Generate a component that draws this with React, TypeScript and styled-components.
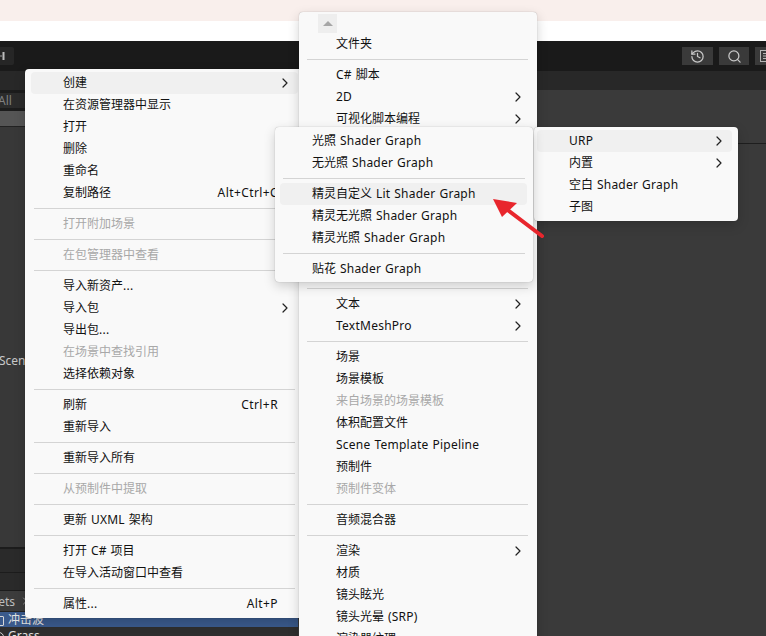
import React from "react";
import styled, { createGlobalStyle } from "styled-components";
import { ChevronRight, History, Search } from "lucide-react";

const GlobalStyle = createGlobalStyle`
	html, body {
		margin: 0;
		padding: 0;
		background: #383838;
		overflow: hidden;
	}
	body {
		font-family: "Noto Sans", "Noto Sans CJK SC", sans-serif;
		font-size: 12px;
	}
`;

const Page = styled.div`
	position: relative;
	width: 766px;
	height: 636px;
	display: flex;
	flex-direction: column;
	overflow: hidden;
`;

const PinkBand = styled.div`
	height: 21px;
	background: #f9efec;
`;

const WhiteBand = styled.div`
	height: 20px;
	background: #fff;
`;

const Toolbar = styled.div`
	height: 30px;
	flex: none;
	display: flex;
	align-items: flex-start;
	padding-top: 6px;
	box-sizing: border-box;
	background: #1a1a1a;
`;

const LayoutButton = styled.div`
	width: 14px;
	height: 18px;
	background: #262626;
	border-radius: 0 2px 2px 0;
	display: flex;
	align-items: center;
`;

const ToolGroup = styled.div`
	margin-left: auto;
	margin-right: -11px;
	display: flex;
	gap: 6px;
`;

const ToolButton = styled.div<{ $w: number }>`
	width: ${(p) => p.$w}px;
	height: 18px;
	background: #3a3a3a;
	color: #c8c8c8;
	display: flex;
	align-items: center;
	justify-content: center;
`;

const Workspace = styled.div`
	flex: 1;
	display: flex;
	min-height: 0;
`;

const Sidebar = styled.div`
	width: 298px;
	flex: none;
	display: flex;
	flex-direction: column;
	background: #383838;
	color: #c8c8c8;
`;

const SideBar = styled.div<{ $h: number; $bg: string }>`
	height: ${(p) => p.$h}px;
	flex: none;
	background: ${(p) => p.$bg};
	display: flex;
	align-items: center;
	overflow: hidden;
	white-space: nowrap;
`;

const AssetRow = styled.div<{ $h: number; $bg: string; $top: number }>`
	height: ${(p) => p.$h}px;
	flex: none;
	box-sizing: border-box;
	padding-top: ${(p) => p.$top}px;
	background: ${(p) => p.$bg};
	display: flex;
	align-items: flex-start;
	line-height: 16px;
	overflow: hidden;
	white-space: nowrap;
`;

const SearchText = styled.span`
	color: #808080;
	font-size: 12px;
	margin-left: -2px;
`;

const SceneArea = styled.div`
	flex: 1;
	padding-top: 225px;
	line-height: 18px;
	font-size: 12px;
	text-indent: -1px;
`;

const BreadcrumbText = styled.span`
	font-size: 12px;
	color: #bdbdbd;
	margin-left: -21px;
`;

const Crumb = styled(ChevronRight)`
	margin-left: 4px;
	color: #9a9a9a;
`;

const AssetLabel = styled.span`
	margin-left: 8px;
	font-size: 12px;
	color: #e0e0e0;
`;

const AssetIcon = styled.span<{ $round?: boolean }>`
	width: 8px;
	height: 8px;
	margin: 4px -4px 0 -6px;
	border: 1px solid #d6d6d6;
	border-radius: ${(p) => (p.$round ? "50%" : "1px")};
	flex: none;
`;

const MainPane = styled.div`
	flex: 1;
	display: flex;
	flex-direction: column;
	background: #3a3a3a;
`;

const TabStrip = styled.div`
	height: 19px;
	flex: none;
	background: #282828;
`;

const PaneHeader = styled.div`
	height: 54px;
	flex: none;
	box-sizing: border-box;
	border-bottom: 1px solid #1e1e1e;
`;

const Menu = styled.div<{ $x: number; $y: number; $w: number; $z: number; $bottom?: number }>`
	position: absolute;
	left: ${(p) => p.$x}px;
	top: ${(p) => p.$y}px;
	width: ${(p) => p.$w}px;
	z-index: ${(p) => p.$z};
	box-sizing: border-box;
	padding: 3px 0 ${(p) => p.$bottom ?? 3}px;
	background: #f9f9f9;
	border-radius: 4px;
	box-shadow: 0 0 1px rgba(0, 0, 0, 0.35), 0 4px 12px rgba(0, 0, 0, 0.18);
`;

const Row = styled.div<{ $active?: boolean; $disabled?: boolean; $inset: number; $indent: number }>`
	height: 22px;
	box-sizing: border-box;
	margin: 0 6px 0 ${(p) => p.$inset}px;
	padding: 0 5px 2px ${(p) => p.$indent}px;
	display: flex;
	align-items: center;
	border-radius: 4px;
	background: ${(p) => (p.$active ? "#f0f0f0" : "transparent")};
	color: ${(p) => (p.$disabled ? "#a8a8a8" : "#111111")};
	white-space: nowrap;
`;

const LatinText = styled.span`
	letter-spacing: 0.25px;
	word-spacing: 0.5px;
	white-space: pre;
`;

const Shortcut = styled.span`
	margin-left: auto;
	padding-right: 15px;
	letter-spacing: 0.4px;
`;

const Arrow = styled(ChevronRight)`
	margin-left: auto;
	margin-top: 2px;
	color: #222;
`;

const Separator = styled.div<{ $left: number; $right: number }>`
	height: 9px;
	margin: 0 ${(p) => p.$right}px 0 ${(p) => p.$left}px;
	display: flex;
	align-items: center;
	&::after {
		content: "";
		flex: 1;
		height: 1px;
		background: #d4d4d4;
	}
`;

const ScrollBox = styled.div`
	width: 19px;
	height: 19px;
	margin: -1px 0 0 19px;
	background: #eeeeee;
	display: flex;
	align-items: center;
	justify-content: center;
	&::after {
		content: "";
		border: 5.5px solid transparent;
		border-top: 0;
		border-bottom: 5px solid #a6a6a6;
		margin-top: -1px;
	}
`;

const CoveredRows = styled.div<{ $rows: number }>`
	height: ${(p) => p.$rows * 22}px;
`;

const RedArrow = styled.svg`
	position: absolute;
	left: 488px;
	top: 194px;
	z-index: 5;
`;

type Item =
	| "sep"
	| { label: string; shortcut?: string; arrow?: boolean; disabled?: boolean; active?: boolean }
	| { covered: number };

const contextItems: Item[] = [
	{ label: "创建", arrow: true, active: true },
	{ label: "在资源管理器中显示" },
	{ label: "打开" },
	{ label: "删除" },
	{ label: "重命名" },
	{ label: "复制路径", shortcut: "Alt+Ctrl+C" },
	"sep",
	{ label: "打开附加场景", disabled: true },
	"sep",
	{ label: "在包管理器中查看", disabled: true },
	"sep",
	{ label: "导入新资产..." },
	{ label: "导入包", arrow: true },
	{ label: "导出包..." },
	{ label: "在场景中查找引用", disabled: true },
	{ label: "选择依赖对象" },
	"sep",
	{ label: "刷新", shortcut: "Ctrl+R" },
	{ label: "重新导入" },
	"sep",
	{ label: "重新导入所有" },
	"sep",
	{ label: "从预制件中提取", disabled: true },
	"sep",
	{ label: "更新 UXML 架构" },
	"sep",
	{ label: "打开 C# 项目" },
	{ label: "在导入活动窗口中查看" },
	"sep",
	{ label: "属性...", shortcut: "Alt+P" },
];

const createItems: Item[] = [
	{ label: "文件夹" },
	"sep",
	{ label: "C# 脚本" },
	{ label: "2D", arrow: true },
	{ label: "可视化脚本编程", arrow: true },
	{ covered: 7 },
	"sep",
	{ label: "文本", arrow: true },
	{ label: "TextMeshPro", arrow: true },
	"sep",
	{ label: "场景" },
	{ label: "场景模板" },
	{ label: "来自场景的场景模板", disabled: true },
	{ label: "体积配置文件" },
	{ label: "Scene Template Pipeline" },
	{ label: "预制件" },
	{ label: "预制件变体", disabled: true },
	"sep",
	{ label: "音频混合器" },
	"sep",
	{ label: "渲染", arrow: true },
	{ label: "材质" },
	{ label: "镜头眩光" },
	{ label: "镜头光晕 (SRP)" },
	{ label: "渲染器纹理" },
];

const urpItems: Item[] = [
	{ label: "光照 Shader Graph" },
	{ label: "无光照 Shader Graph" },
	"sep",
	{ label: "精灵自定义 Lit Shader Graph", active: true },
	{ label: "精灵无光照 Shader Graph" },
	{ label: "精灵光照 Shader Graph" },
	"sep",
	{ label: "贴花 Shader Graph" },
];

const shaderItems: Item[] = [
	{ label: "URP", arrow: true, active: true },
	{ label: "内置", arrow: true },
	{ label: "空白 Shader Graph" },
	{ label: "子图" },
];

// latin runs are wider in the original UI font than in Noto Sans
function Label({ text }: { text: string }) {
	const parts = text.split(/([\x20-\x7e]+)/).filter(Boolean);
	return (
		<span>
			{parts.map((part, i) =>
				/^[\x20-\x7e]/.test(part) ? <LatinText key={i}>{part}</LatinText> : part
			)}
		</span>
	);
}

interface MenuItemsProps {
	items: Item[];
	inset: number;
	indent: number;
	sepLeft?: number;
	sepRight?: number;
}

function MenuItems({ items, inset, indent, sepLeft = 8, sepRight = 9 }: MenuItemsProps) {
	return (
		<>
			{items.map((item, i) => {
				if (item === "sep") return <Separator key={i} $left={sepLeft} $right={sepRight} />;
				if ("covered" in item) return <CoveredRows key={i} $rows={item.covered} />;
				return (
					<Row
						key={i}
						$inset={inset}
						$indent={indent}
						$active={item.active}
						$disabled={item.disabled}
					>
						<Label text={item.label} />
						{item.shortcut && <Shortcut>{item.shortcut}</Shortcut>}
						{item.arrow && <Arrow size={16} strokeWidth={1.8} />}
					</Row>
				);
			})}
		</>
	);
}

export default function App() {
	return (
		<>
			<GlobalStyle />
			<Page>
				<PinkBand />
				<WhiteBand />
				<Toolbar>
					<LayoutButton>
						<svg width="8" height="12" viewBox="0 0 8 12">
							<path d="M0 6h2" stroke="#9a9a9a" />
							<path d="M3.5 2v8" stroke="#bdbdbd" strokeWidth="2" />
						</svg>
					</LayoutButton>
					<ToolGroup>
						<ToolButton $w={31}>
							<History size={15} />
						</ToolButton>
						<ToolButton $w={30}>
							<Search size={15} />
						</ToolButton>
						<ToolButton $w={22}>
							<svg width="14" height="14" viewBox="0 0 14 14" fill="none" stroke="#b5b5b5">
								<rect x="1.5" y="1.5" width="11" height="11" />
								<path d="M4 4.5h6M4 7h6M4 9.5h6" />
							</svg>
						</ToolButton>
					</ToolGroup>
				</Toolbar>
				<Workspace>
					<Sidebar>
						<SideBar $h={19} $bg="#282828" />
						<SideBar $h={3} $bg="#1c1c1c" />
						<SideBar $h={15} $bg="#2b2b2b">
							<SearchText>All</SearchText>
						</SideBar>
						<SideBar $h={3} $bg="#1c1c1c" />
						<SideBar $h={15} $bg="#555555" />
						<SideBar $h={1} $bg="#222222" />
						<SceneArea>Scene</SceneArea>
						<SideBar $h={2} $bg="#1c1c1c" />
						<SideBar $h={23} $bg="#2a2a2a" />
						<SideBar $h={1} $bg="#1c1c1c" />
						<SideBar $h={17} $bg="#2a2a2a" />
						<SideBar $h={1} $bg="#1c1c1c" />
						<SideBar $h={20} $bg="#3c3c3c">
							<BreadcrumbText>Assets</BreadcrumbText>
							<Crumb size={12} />
						</SideBar>
						<SideBar $h={1} $bg="#222222" />
						<AssetRow $h={15} $bg="#3a5a8c" $top={0}>
							<AssetIcon />
							<AssetLabel>冲击波</AssetLabel>
						</AssetRow>
						<AssetRow $h={9} $bg="#2e2e2e" $top={1}>
							<AssetIcon $round />
							<AssetLabel>Grass</AssetLabel>
						</AssetRow>
					</Sidebar>
					<MainPane>
						<TabStrip />
						<PaneHeader />
					</MainPane>
				</Workspace>

				<Menu $x={25} $y={69} $w={279} $z={1}>
					<MenuItems items={contextItems} inset={6} indent={32} sepLeft={9} />
				</Menu>
				<Menu $x={299} $y={12} $w={238} $z={2}>
					<ScrollBox />
					<MenuItems items={createItems} inset={6} indent={31} />
				</Menu>
				<Menu $x={534} $y={127} $w={204} $z={3}>
					<MenuItems items={shaderItems} inset={3} indent={32} />
				</Menu>
				<Menu $x={275} $y={127} $w={258} $z={4} $bottom={2}>
					<MenuItems items={urpItems} inset={5} indent={32} sepRight={8} />
				</Menu>
				<RedArrow width="60" height="48" viewBox="0 0 60 48">
					<path d="M17 14 L54 42" stroke="#e8262d" strokeWidth="4" strokeLinecap="round" />
					<polygon points="5,5 29,9 14,23" fill="#e8262d" />
				</RedArrow>
			</Page>
		</>
	);
}
